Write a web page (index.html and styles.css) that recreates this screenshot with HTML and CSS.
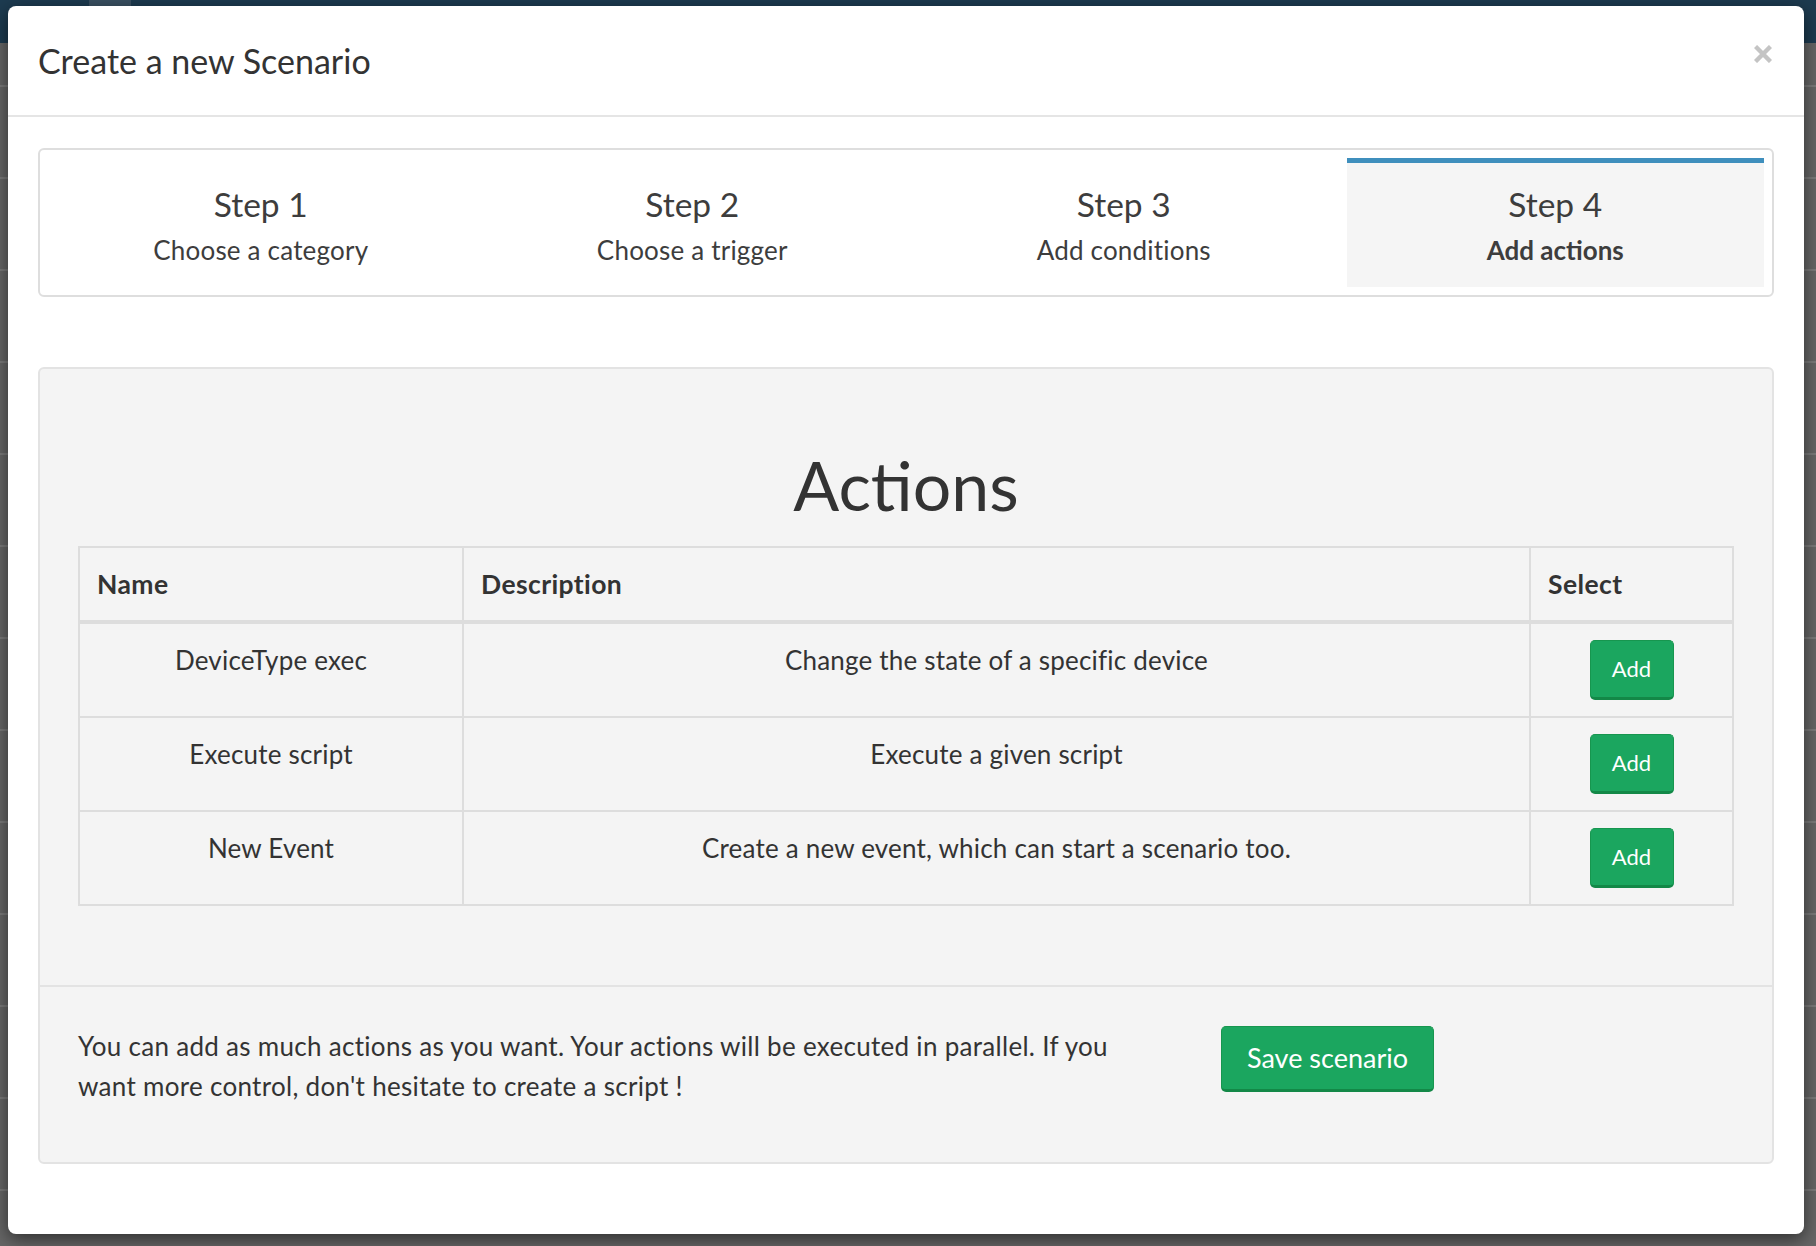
FILE: index.html
```html
<!DOCTYPE html>
<html lang="en">
<head>
<meta charset="utf-8">
<title>Create a new Scenario</title>
<link rel="stylesheet" href="styles.css">
</head>
<body>
<div class="page">
  <div class="navbar"><span class="nav-tab"></span></div>
  <div class="page-rows"></div>
</div>

<div class="modal">
  <div class="modal-header">
    <h4 class="modal-title">Create a new Scenario</h4>
    <button class="close" type="button" aria-label="Close">
      <svg width="18" height="18" viewBox="0 0 18 18"><path d="M1.5 1.5L16.5 16.5M16.5 1.5L1.5 16.5" stroke="#c4c4c4" stroke-width="4.4" fill="none"/></svg>
    </button>
  </div>

  <div class="modal-body">
    <div class="steps">
      <div class="step">
        <div class="step-title">Step 1</div>
        <div class="step-sub">Choose a category</div>
      </div>
      <div class="step">
        <div class="step-title">Step 2</div>
        <div class="step-sub">Choose a trigger</div>
      </div>
      <div class="step">
        <div class="step-title">Step 3</div>
        <div class="step-sub">Add conditions</div>
      </div>
      <div class="step active">
        <div class="step-title">Step 4</div>
        <div class="step-sub">Add actions</div>
      </div>
    </div>

    <div class="panel">
      <div class="panel-main">
        <h1 class="panel-heading">Actions</h1>
        <table class="actions-table">
          <colgroup>
            <col class="col-name">
            <col class="col-desc">
            <col class="col-select">
          </colgroup>
          <thead>
            <tr><th>Name</th><th>Description</th><th>Select</th></tr>
          </thead>
          <tbody>
            <tr>
              <td>DeviceType exec</td>
              <td>Change the state of a specific device</td>
              <td><button class="btn btn-success btn-sm" type="button">Add</button></td>
            </tr>
            <tr>
              <td>Execute script</td>
              <td>Execute a given script</td>
              <td><button class="btn btn-success btn-sm" type="button">Add</button></td>
            </tr>
            <tr>
              <td>New Event</td>
              <td>Create a new event, which can start a scenario too.</td>
              <td><button class="btn btn-success btn-sm" type="button">Add</button></td>
            </tr>
          </tbody>
        </table>
      </div>
      <div class="panel-foot">
        <p class="foot-text">You can add as much actions as you want. Your actions will be executed in parallel. If you<br>want more control, don't hesitate to create a script !</p>
        <div class="foot-action">
          <button class="btn btn-success btn-lg" type="button">Save scenario</button>
        </div>
      </div>
    </div>
  </div>
</div>
</body>
</html>
```

FILE: styles.css
```css
* { box-sizing: border-box; }

html, body {
  margin: 0;
  padding: 0;
}

body {
  width: 1816px;
  height: 1246px;
  overflow: hidden;
  position: relative;
  background: #636363;
  font-family: "Lato", "Source Sans Pro", "Noto Sans", sans-serif;
  font-size: 26px;
  letter-spacing: 0.2px;
  line-height: 40px;
  color: #333;
}

/* page behind the modal backdrop */
.page {
  height: 1246px;
  display: flex;
  flex-direction: column;
}

.navbar {
  height: 43px;
  background: #1d3b50;
  position: relative;
}

.nav-tab {
  position: absolute;
  left: 89px;
  top: 0;
  width: 42px;
  height: 6px;
  background: #3a5062;
}

.page-rows {
  flex: 1;
  background-color: #666;
  background-image: linear-gradient(to bottom,
    transparent 0, transparent 90px,
    #7a7a7a 90px, #7a7a7a 92px);
  background-size: 100% 92px;
  background-position: 0 44px;
}

/* modal */
.modal {
  position: absolute;
  left: 8px;
  top: 6px;
  width: 1796px;
  background: #fff;
  border-radius: 8px;
  box-shadow: 0 5px 18px rgba(0, 0, 0, 0.55);
}

.modal-header {
  display: flex;
  justify-content: space-between;
  align-items: flex-start;
  padding: 35px 30px 34px 30px;
  border-bottom: 2px solid #e5e5e5;
}

.modal-title {
  margin: 0;
  font-size: 34px;
  font-weight: 400;
  letter-spacing: 0;
  line-height: 40px;
  color: #333;
}

.close {
  margin: 4px 2px 0 0;
  padding: 0;
  border: 0;
  background: none;
  width: 18px;
  height: 18px;
  display: flex;
}

.modal-body {
  padding: 31px 30px 70px 30px;
}

/* wizard steps */
.steps {
  display: flex;
  gap: 14px;
  border: 2px solid #dedede;
  border-radius: 6px;
  padding: 8px 8px 8px 12px;
  margin-bottom: 70px;
}

.step {
  flex: 1;
  text-align: center;
  border-top: 5px solid transparent;
  padding: 21px 0 17px 0;
  color: #3d3d3d;
}

.step.active {
  border-top-color: #3f8fbd;
  background: #f5f5f5;
}

.step-title {
  font-size: 33.5px;
  letter-spacing: 0;
  line-height: 40px;
}

.step-sub {
  margin-top: 6px;
  font-size: 26px;
  line-height: 40px;
}

.step.active .step-sub {
  font-weight: 700;
  letter-spacing: 0;
}

/* panel */
.panel {
  background: #f4f4f4;
  border: 2px solid #e3e3e3;
  border-radius: 6px;
}

.panel-main {
  padding: 75px 38px 79px 38px;
  border-bottom: 2px solid #e3e3e3;
}

.panel-heading {
  margin: 0 0 21px 0;
  text-align: center;
  font-size: 68px;
  font-weight: 400;
  letter-spacing: 0;
  line-height: 81px;
  color: #333;
}

.actions-table {
  width: 100%;
  border-collapse: collapse;
}

.col-name { width: 384px; }
.col-select { width: 203px; }

.actions-table th,
.actions-table td {
  border: 2px solid #dddddd;
}

.actions-table th {
  text-align: left;
  font-size: 26.5px;
  letter-spacing: 0.4px;
  font-weight: 700;
  padding: 16px 17px 16px 17px;
  border-bottom-width: 4px;
}

.actions-table td {
  text-align: center;
  vertical-align: top;
  padding: 16px 17px 16px 17px;
}

/* buttons */
.btn {
  font-family: inherit;
  color: #fff;
  cursor: pointer;
  border-radius: 5px;
  letter-spacing: 0;
}

.btn-success {
  background: #1ba65f;
  border: 1px solid #17964f;
  border-bottom: 3px solid #138847;
}

.btn-sm {
  width: 84px;
  height: 60px;
  padding: 0;
  font-size: 22px;
  line-height: 56px;
  vertical-align: top;
}

.btn-lg {
  width: 213px;
  height: 66px;
  padding: 0;
  font-size: 27px;
  line-height: 60px;
}

/* panel footer */
.panel-foot {
  display: flex;
  align-items: flex-start;
  gap: 60px;
  padding: 39px 38px 38px 38px;
}

.foot-text {
  width: 1083px;
  margin: 0 0 18px 0;
  letter-spacing: 0.3px;
}

.foot-action {
  display: flex;
}
```
